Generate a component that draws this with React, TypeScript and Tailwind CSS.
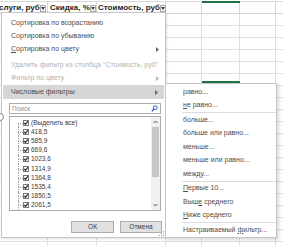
import React from "react";

const cols = [48, 49, 69, 36, 38, 36, 20];
const colClass = "grid grid-cols-[48px_49px_69px_36px_38px_36px_20px]";

function DropBtn() {
  return (
    <span className="ml-auto mr-[1px] flex h-[7px] w-[7px] items-center justify-center border border-[#a9a9a9] bg-[#f4f4f4]">
      <svg width="4" height="3" viewBox="0 0 4 3">
        <path d="M0 0h4L2 3z" fill="#3c3c3c" />
      </svg>
    </span>
  );
}

function Arrow({ light }: { light?: boolean }) {
  return (
    <svg width="3" height="5" viewBox="0 0 3 5" className="ml-auto mr-[6px]">
      <path d="M0 0l3 2.5L0 5z" fill={light ? "#b8b8b8" : "#666"} />
    </svg>
  );
}

function Check() {
  return (
    <svg width="6" height="6" viewBox="0 0 6 6" className="shrink-0">
      <rect x="0.5" y="0.5" width="5" height="5" fill="#fff" stroke="#777" />
      <path d="M1.3 3l1.2 1.3L4.8 1.4" fill="none" stroke="#222" strokeWidth="1.2" />
    </svg>
  );
}

const values = [
  "(Выделить все)",
  "418,5",
  "585,9",
  "669,6",
  "1023,6",
  "1314,9",
  "1364,8",
  "1535,4",
  "1850,5",
  "2061,5",
];

function SubItem({ children }: { children: React.ReactNode }) {
  return <div className="flex h-[13.5px] items-center pl-[17px]">{children}</div>;
}

function Sep() {
  return <div className="ml-[16px] h-px bg-[#dcdcdc]" />;
}

export default function App() {
  return (
    <div className="relative h-[246px] w-[283px] overflow-hidden bg-white font-['Liberation_Sans',Arial,sans-serif] text-[#4d4d4d]">
      {/* sheet */}
      <div className="h-[2px] border-b border-[#d9d9d9]" />
      <div className={`${colClass} h-[12px] border-b border-[#d4d4d4]`}>
        <div className="flex items-center border-r border-[#d4d4d4] text-[8px] font-bold text-[#262626]">
          <span className="ml-[-1px] whitespace-nowrap">слуги, руб</span>
          <DropBtn />
        </div>
        <div className="flex items-center border-r border-[#d4d4d4] pl-[2px] text-[8px] font-bold text-[#262626]">
          <span className="whitespace-nowrap">Скидка, %</span>
          <DropBtn />
        </div>
        <div className="flex items-center border-r border-[#d4d4d4] pl-[1px] text-[8px] font-bold text-[#262626]">
          <span className="whitespace-nowrap">Стоимость, руб</span>
          <DropBtn />
        </div>
        {cols.slice(3).map((_, i) => (
          <div key={i} className="border-r border-[#d4d4d4]" />
        ))}
      </div>
      {Array.from({ length: 20 }).map((_, r) => (
        <div key={r} className={`${colClass} h-[12px] border-b border-[#e0e0e0]`}>
          {cols.map((_, c) => (
            <div key={c} className="border-r border-[#e0e0e0]" />
          ))}
        </div>
      ))}

      {/* selection marks */}
      <div className="absolute left-[202px] top-[1px] h-[2px] w-[38px] bg-[#217346]" />
      <div className="absolute left-[202px] top-[81px] h-[2px] w-[38px] bg-[#217346]" />

      {/* filter menu */}
      <div className="absolute left-[1px] top-[12px] flex h-[226px] w-[165px] flex-col border border-[#c6c6c6] bg-white text-[7px] shadow-[1px_1px_2px_rgba(0,0,0,0.12)]">
        <div className="h-[4px]" />
        <div className="flex h-[13px] items-center pl-[9px]">Сортировка по возрастанию</div>
        <div className="flex h-[13px] items-center pl-[9px]">Сортировка по убыванию</div>
        <div className="flex h-[13px] items-center pl-[9px]">
          <span><span className="underline">С</span>ортировка по цвету</span>
          <Arrow />
        </div>
        <div className="h-[2px]" />
        <div className="flex h-[14px] items-center whitespace-nowrap pl-[9px] text-[#b3b3b3]">
          Удалить фильтр из столбца "Стоимость, руб"
        </div>
        <div className="flex h-[13px] items-center pl-[9px] text-[#b3b3b3]">
          Фильтр по цвету
          <Arrow light />
        </div>
        <div className="mx-[1px] flex h-[14px] items-center bg-[#d6d6d6] pl-[8px]">
          Числовые фильтры
          <Arrow />
        </div>

        <div className="ml-[7px] mt-[4px] flex h-[11px] w-[152px] items-center border border-[#ababab] bg-white pl-[2px] pr-[2px] text-[6.5px] text-[#8f8f8f]">
          Поиск
          <svg width="7" height="7" viewBox="0 0 7 7" className="ml-auto">
            <circle cx="4.3" cy="2.7" r="1.9" fill="none" stroke="#2a62b8" strokeWidth="1" />
            <path d="M3 4L0.8 6.2" stroke="#2a62b8" strokeWidth="1.4" />
          </svg>
        </div>

        <div className="ml-[7px] mt-[2px] flex h-[95px] w-[152px] border border-[#ababab] bg-white">
          <div className="flex flex-1 flex-col overflow-hidden pt-px">
            {values.map((v, i) => (
              <div key={v} className="flex h-[9.2px] shrink-0 items-center text-[6.5px] text-[#3a3a3a]">
                <div className="ml-[8px] flex h-full w-[5px] flex-col">
                  <div className={`h-1/2 ${i === 0 ? "" : "border-l border-dotted border-[#a0a0a0]"}`} />
                  <div className="h-1/2 border-l border-t border-dotted border-[#a0a0a0]" />
                </div>
                <Check />
                <span className="ml-[2px] whitespace-nowrap">{v}</span>
              </div>
            ))}
            <div className="ml-[8px] h-[3px] w-[5px] shrink-0 border-l border-dotted border-[#a0a0a0]" />
          </div>
          <div className="flex w-[9px] flex-col items-center bg-[#f0f0f0]">
            <svg width="5" height="4" viewBox="0 0 5 4" className="mt-[3px]">
              <path d="M0.5 3L2.5 1l2 2" fill="none" stroke="#555" strokeWidth="1" />
            </svg>
            <div className="mt-[3px] h-[50px] w-[7px] bg-[#c6c6c6]" />
            <svg width="5" height="4" viewBox="0 0 5 4" className="mt-auto mb-[3px]">
              <path d="M0.5 1l2 2 2-2" fill="none" stroke="#555" strokeWidth="1" />
            </svg>
          </div>
        </div>

        <div className="ml-[69px] mt-[10px] flex gap-[6px]">
          <div className="flex h-[12px] w-[43px] items-center justify-center border border-[#adadad] bg-[#e1e1e1] text-[6.5px] text-[#3a3a3a]">
            ОК
          </div>
          <div className="flex h-[12px] w-[42px] items-center justify-center border border-[#adadad] bg-[#e1e1e1] text-[6.5px] text-[#3a3a3a]">
            Отмена
          </div>
        </div>

        <svg width="5" height="5" viewBox="0 0 5 5" className="absolute bottom-[1px] right-[1px]">
          <rect x="4" y="0" width="1" height="1" fill="#9a9a9a" />
          <rect x="2" y="2" width="1" height="1" fill="#9a9a9a" />
          <rect x="4" y="2" width="1" height="1" fill="#9a9a9a" />
          <rect x="0" y="4" width="1" height="1" fill="#9a9a9a" />
          <rect x="2" y="4" width="1" height="1" fill="#9a9a9a" />
          <rect x="4" y="4" width="1" height="1" fill="#9a9a9a" />
        </svg>
      </div>

      <div className="absolute left-[-4px] top-[113px] h-[8px] w-[8px] rounded-full border border-[#8a8a8a] bg-white" />

      {/* number filters submenu */}
      <div className="absolute left-[165px] top-[83px] flex h-[155px] w-[112px] flex-col border border-[#c6c6c6] bg-white pt-px text-[7px] shadow-[2px_2px_3px_rgba(0,0,0,0.15)]">
        <SubItem>равно...</SubItem>
        <SubItem><span><span className="underline">н</span>е равно...</span></SubItem>
        <Sep />
        <SubItem>больше...</SubItem>
        <SubItem>больше или равно...</SubItem>
        <SubItem>меньше...</SubItem>
        <SubItem>меньше или равно...</SubItem>
        <SubItem>между...</SubItem>
        <Sep />
        <SubItem><span><span className="underline">П</span>ервые 10...</span></SubItem>
        <SubItem><span>Выш<span className="underline">е</span> среднего</span></SubItem>
        <SubItem><span><span className="underline">Н</span>иже среднего</span></SubItem>
        <Sep />
        <SubItem><span>Настраиваемый <span className="underline">ф</span>ильтр...</span></SubItem>
      </div>
    </div>
  );
}
